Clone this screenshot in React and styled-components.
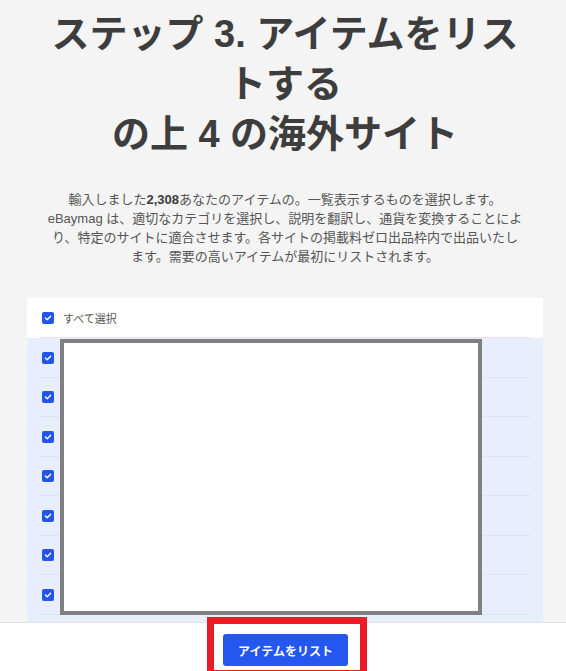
import React from 'react';
import styled, { createGlobalStyle } from 'styled-components';

const GlobalStyle = createGlobalStyle`
    html, body {
        margin: 0;
        padding: 0;
        background: #f4f4f4;
    }
    body {
        font-family: "Liberation Sans", "Noto Sans CJK JP", sans-serif;
        overflow: hidden;
    }
`

const Page = styled.div`
    width: 516px;
    margin-left: 27px;
    padding-bottom: 60px;
`

const Title = styled.h1`
    margin: 9px 0 0;
    font-size: 38px;
    line-height: 50px;
    font-weight: 700;
    color: #3d3d3d;
    text-align: center;
    white-space: nowrap;
`

const Lead = styled.p`
    margin: 31px 0 0;
    font-size: 13px;
    line-height: 19px;
    color: #555;
    text-align: center;
    white-space: nowrap;

    & > b {
        color: #3a3a3a;
    }
`

const Card = styled.div`
    position: relative;
    margin-top: 32px;
    background: #fff;
`

const HeaderRow = styled.div`
    display: flex;
    align-items: center;
    gap: 9px;
    height: 39px;
    margin: 0 12px;
    padding-left: 3px;
    border-bottom: 1px solid #e6e6e6;
    font-family: "Noto Sans CJK JP", sans-serif;
    font-size: 11px;
    color: #555;
`

const RowList = styled.div`
    background: #e8eefd;
    padding: 0 12px;
`

const Row = styled.div`
    display: flex;
    align-items: center;
    height: 39.5px;
    box-sizing: border-box;
    padding-left: 3px;
    padding-top: 1px;
    border-bottom: 1px solid #dfe3ec;
`

const Box = styled.span`
    display: inline-flex;
    align-items: center;
    justify-content: center;
    width: 12px;
    height: 12px;
    border-radius: 2px;
    background: #2354ec;
    flex-shrink: 0;
`

const Cover = styled.div`
    position: absolute;
    left: 33px;
    top: 41px;
    width: 422px;
    height: 276px;
    box-sizing: border-box;
    border: 4px solid #808080;
    background: #fff;
`

const Footer = styled.div`
    position: fixed;
    left: 0;
    right: 0;
    bottom: 0;
    height: 48px;
    background: #fff;
    border-top: 1px solid #e3e3e3;
`

const FooterInner = styled.div`
    position: relative;
    width: 516px;
    margin-left: 27px;
    height: 100%;
    display: flex;
    justify-content: center;
    padding-top: 11px;
    box-sizing: border-box;
`

const ListButton = styled.button`
    width: 125px;
    height: 32px;
    border: none;
    border-radius: 3px;
    background: #2456f0;
    color: #fff;
    font-family: "Noto Sans CJK JP", sans-serif;
    font-size: 12px;
    font-weight: 700;
    padding: 0;
    margin-left: 1px;
`

const Highlight = styled.div`
    position: absolute;
    left: 180px;
    top: -6px;
    width: 160px;
    height: 60px;
    box-sizing: border-box;
    border: 7px solid #ea1d27;
    pointer-events: none;
`

const Check = () => (
    <Box>
        <svg width="8" height="8" viewBox="0 0 8 8">
            <path d="M1.4 4.1 L3.2 5.8 L6.6 2.3" fill="none" stroke="#fff" strokeWidth="1.4" strokeLinecap="round" strokeLinejoin="round" />
        </svg>
    </Box>
)

const rows = Array.from({ length: 9 }, (_, i) => i);

const App = () => {
    return (
        <>
            <GlobalStyle />
            <Page>
                <Title>
                    ステップ 3. アイテムをリス<br />
                    トする<br />
                    の上 4 の海外サイト
                </Title>
                <Lead>
                    輸入しました<b>2,308</b>あなたのアイテムの。一覧表示するものを選択します。<br />
                    eBaymag は、適切なカテゴリを選択し、説明を翻訳し、通貨を変換することによ<br />
                    り、特定のサイトに適合させます。各サイトの掲載料ゼロ出品枠内で出品いたし<br />
                    ます。需要の高いアイテムが最初にリストされます。
                </Lead>
                <Card>
                    <HeaderRow>
                        <Check />
                        すべて選択
                    </HeaderRow>
                    <RowList>
                        {rows.map((r) => (
                            <Row key={r}>
                                <Check />
                            </Row>
                        ))}
                    </RowList>
                    <Cover />
                </Card>
            </Page>
            <Footer>
                <FooterInner>
                    <ListButton>アイテムをリスト</ListButton>
                    <Highlight />
                </FooterInner>
            </Footer>
        </>
    )
}

export default App;
